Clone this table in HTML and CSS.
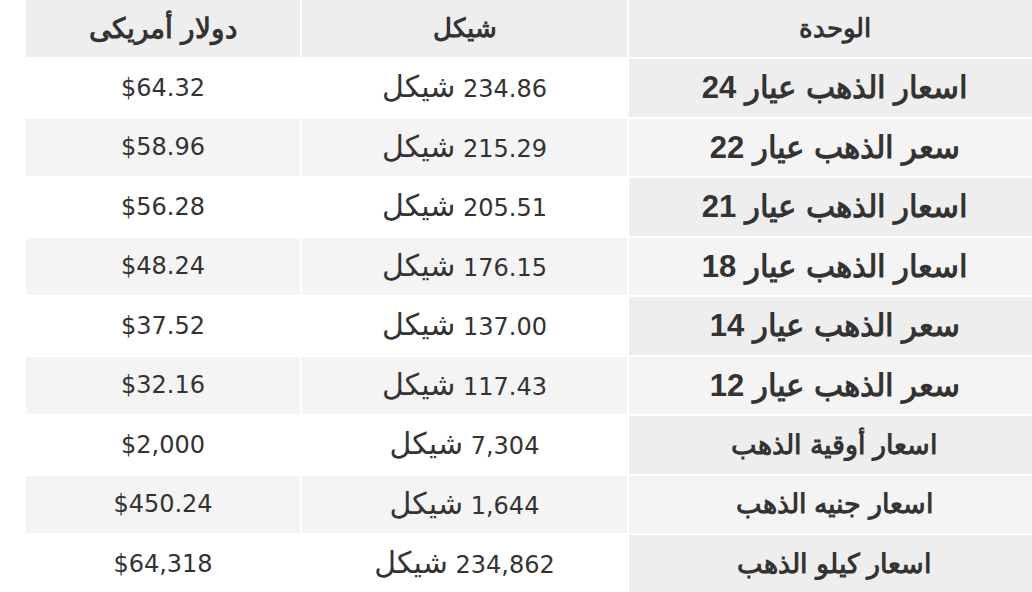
FILE: index.html
```html
<!DOCTYPE html>
<html lang="ar" dir="rtl">
<head>
<meta charset="utf-8">
<title>أسعار الذهب</title>
<link rel="stylesheet" href="styles.css">
</head>
<body>
<table class="prices">
  <colgroup>
    <col class="c-unit">
    <col class="c-ils">
    <col class="c-usd">
  </colgroup>
  <thead>
    <tr><th>الوحدة</th><th>شيكل</th><th class="wide">دولار أمريكى</th></tr>
  </thead>
  <tbody>
    <tr><td class="unit">اسعار الذهب عيار 24</td><td>234.86 <span class="cur">شيكل</span></td><td>$64.32</td></tr>
    <tr><td class="unit">سعر الذهب عيار 22</td><td>215.29 <span class="cur">شيكل</span></td><td>$58.96</td></tr>
    <tr><td class="unit">اسعار الذهب عيار 21</td><td>205.51 <span class="cur">شيكل</span></td><td>$56.28</td></tr>
    <tr><td class="unit">اسعار الذهب عيار 18</td><td>176.15 <span class="cur">شيكل</span></td><td>$48.24</td></tr>
    <tr><td class="unit">سعر الذهب عيار 14</td><td>137.00 <span class="cur">شيكل</span></td><td>$37.52</td></tr>
    <tr><td class="unit">سعر الذهب عيار 12</td><td>117.43 <span class="cur">شيكل</span></td><td>$32.16</td></tr>
    <tr><td class="unit small">اسعار أوقية الذهب</td><td>7,304 <span class="cur">شيكل</span></td><td>$2,000</td></tr>
    <tr><td class="unit small">اسعار جنيه الذهب</td><td>1,644 <span class="cur">شيكل</span></td><td>$450.24</td></tr>
    <tr><td class="unit small">اسعار كيلو الذهب</td><td>234,862 <span class="cur">شيكل</span></td><td>$64,318</td></tr>
  </tbody>
</table>
</body>
</html>
```

FILE: styles.css
```css
html, body {
  margin: 0;
  padding: 0;
  background: #ffffff;
  overflow: hidden;
}

body {
  width: 1032px;
  height: 592px;
}

.prices {
  direction: rtl;
  border-collapse: separate;
  border-spacing: 2px;
  table-layout: fixed;
  width: 1019px;
  margin: -2px -11px 0 0;
  color: #333333;
  font-family: "DejaVu Sans", Verdana, sans-serif;
  font-size: 24px;
}

.c-unit { width: 412px; }
.c-ils { width: 325px; }
.c-usd { width: 274px; }

.prices th,
.prices td {
  text-align: center;
  vertical-align: middle;
  padding: 0;
  height: 57.5px;
}

.prices th {
  background: #eeeeee;
  font-family: "Liberation Sans", Arial, sans-serif;
  font-weight: bold;
  font-size: 26px;
  height: 57px;
}

.prices th.wide {
  font-size: 28px;
}

.cur {
  font-size: 30px;
  line-height: 1;
}

.prices tbody tr:nth-child(even) td {
  background: #f4f4f4;
}

.prices tbody td.unit {
  background: #eeeeee;
  font-family: "Liberation Sans", Arial, sans-serif;
  font-weight: bold;
  font-size: 31px;
}

.prices tbody td.unit.small {
  font-size: 27px;
}
```
